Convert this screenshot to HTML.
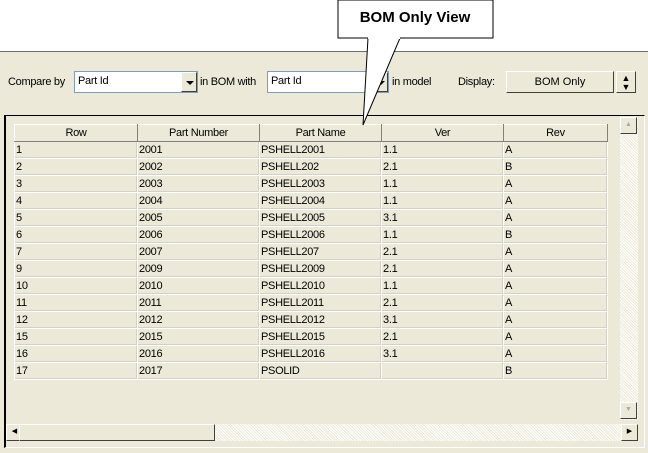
<!DOCTYPE html>
<html><head><style>
*{margin:0;padding:0;box-sizing:border-box}
body{width:648px;height:453px;background:#fff;position:relative;overflow:hidden;font-family:"Liberation Sans",sans-serif;font-size:11px;color:#000}
.abs{position:absolute}
#panel{left:0;top:51px;width:648px;height:402px;background:#ece9d8;border-top:1px solid #6e6e6e;}
.lbl{position:absolute;font-size:11px;letter-spacing:-0.3px;white-space:nowrap}
.combo{position:absolute;background:#fff;border:1px solid #7f9db9;height:22px;padding:3px 3px;font-size:11px;letter-spacing:-0.3px}
.dd{position:absolute;right:0;top:0;width:16px;height:20px;background:#ece9d8;border:1px solid;border-color:#fff #404040 #404040 #fff}
.dd:after{content:"";position:absolute;left:4px;top:8px;border-left:4px solid transparent;border-right:4px solid transparent;border-top:4px solid #000}
.btn{position:absolute;background:#ece9d8;border:1px solid;border-color:#fff #404040 #404040 #fff;text-align:center;font-size:11px}
#grid{left:4px;top:115px;width:641px;height:333px;border:1px solid;border-color:#404040 #fff #fff #404040;border-left:2px solid #000;border-top:1px solid #000}
table{position:absolute;left:14px;top:124px;border-collapse:collapse;font-size:11px;letter-spacing:-0.3px}
td{height:17px;border:1px solid #fff;padding:0 1px;vertical-align:middle;background:#ece9d8;border-right:1px solid #fff;border-bottom:1px solid #fff;box-shadow:inset -1px -1px 0 #d4d0c8}
th{height:17px;font-weight:normal;background:#ece9d8;border:1px solid;border-color:#fff #808080 #808080 #fff;text-align:center}
.sb{position:absolute;background:#f4f3ee;background-image:repeating-linear-gradient(45deg,#ece9d8 0 1px,#fff 1px 2px)}
.arr{position:absolute;width:17px;height:17px;background:#ece9d8;border:1px solid;border-color:#fff #404040 #404040 #fff}
</style></head><body>
<div id="panel" class="abs"></div>
<div class="lbl" style="left:8px;top:76px">Compare by</div>
<div class="combo" style="left:74px;top:71px;width:124px">Part Id<div class="dd"></div></div>
<div class="lbl" style="left:200px;top:76px">in BOM with</div>
<div class="combo" style="left:267px;top:71px;width:122px">Part Id<div class="dd"></div></div>
<div class="lbl" style="left:392px;top:76px">in model</div>
<div class="lbl" style="left:458px;top:76px">Display:</div>
<div class="btn" style="left:506px;top:71px;width:108px;height:22px;line-height:20px">BOM Only</div>
<div class="btn" style="left:616px;top:71px;width:20px;height:22px;font-size:9px;line-height:9px;padding-top:2px">▲<br>▼</div>
<div id="grid" class="abs"></div>
<table>
<tr><th style="width:123px">Row</th><th style="width:122px">Part Number</th><th style="width:122px">Part Name</th><th style="width:122px">Ver</th><th style="width:104px">Rev</th></tr>
<tr><td>1</td><td>2001</td><td>PSHELL2001</td><td>1.1</td><td>A</td></tr>
<tr><td>2</td><td>2002</td><td>PSHELL202</td><td>2.1</td><td>B</td></tr>
<tr><td>3</td><td>2003</td><td>PSHELL2003</td><td>1.1</td><td>A</td></tr>
<tr><td>4</td><td>2004</td><td>PSHELL2004</td><td>1.1</td><td>A</td></tr>
<tr><td>5</td><td>2005</td><td>PSHELL2005</td><td>3.1</td><td>A</td></tr>
<tr><td>6</td><td>2006</td><td>PSHELL2006</td><td>1.1</td><td>B</td></tr>
<tr><td>7</td><td>2007</td><td>PSHELL207</td><td>2.1</td><td>A</td></tr>
<tr><td>9</td><td>2009</td><td>PSHELL2009</td><td>2.1</td><td>A</td></tr>
<tr><td>10</td><td>2010</td><td>PSHELL2010</td><td>1.1</td><td>A</td></tr>
<tr><td>11</td><td>2011</td><td>PSHELL2011</td><td>2.1</td><td>A</td></tr>
<tr><td>12</td><td>2012</td><td>PSHELL2012</td><td>3.1</td><td>A</td></tr>
<tr><td>15</td><td>2015</td><td>PSHELL2015</td><td>2.1</td><td>A</td></tr>
<tr><td>16</td><td>2016</td><td>PSHELL2016</td><td>3.1</td><td>A</td></tr>
<tr><td>17</td><td>2017</td><td>PSOLID</td><td></td><td>B</td></tr>
</table>
<div class="sb" style="left:620px;top:117px;width:18px;height:303px"></div>
<div class="arr" style="left:620px;top:117px;font-size:7px;color:#aaa;text-align:center;line-height:14px">▲</div>
<div class="arr" style="left:620px;top:402px;font-size:7px;color:#aaa;text-align:center;line-height:14px">▼</div>
<div class="sb" style="left:6px;top:424px;width:632px;height:17px"></div>
<div class="arr" style="left:6px;top:424px;font-size:7px;text-align:center;line-height:14px">◀</div>
<div class="abs" style="left:19px;top:424px;width:196px;height:17px;background:#ece9d8;border:1px solid;border-color:#fff #404040 #404040 #fff"></div>
<div class="arr" style="left:621px;top:424px;font-size:7px;text-align:center;line-height:14px">▶</div>
<svg class="abs" style="left:0;top:0" width="648" height="453">
<polygon points="338,0 493,0 493,38 400,38 363,125 368,38 338,38" fill="#fff" stroke="#000" stroke-width="1"/>
<line x1="368" y1="38" x2="400" y2="38" stroke="#fff" stroke-width="2"/>
<text x="415" y="22" text-anchor="middle" font-family="Liberation Sans" font-weight="bold" font-size="15">BOM Only View</text>
</svg>
</body></html>
